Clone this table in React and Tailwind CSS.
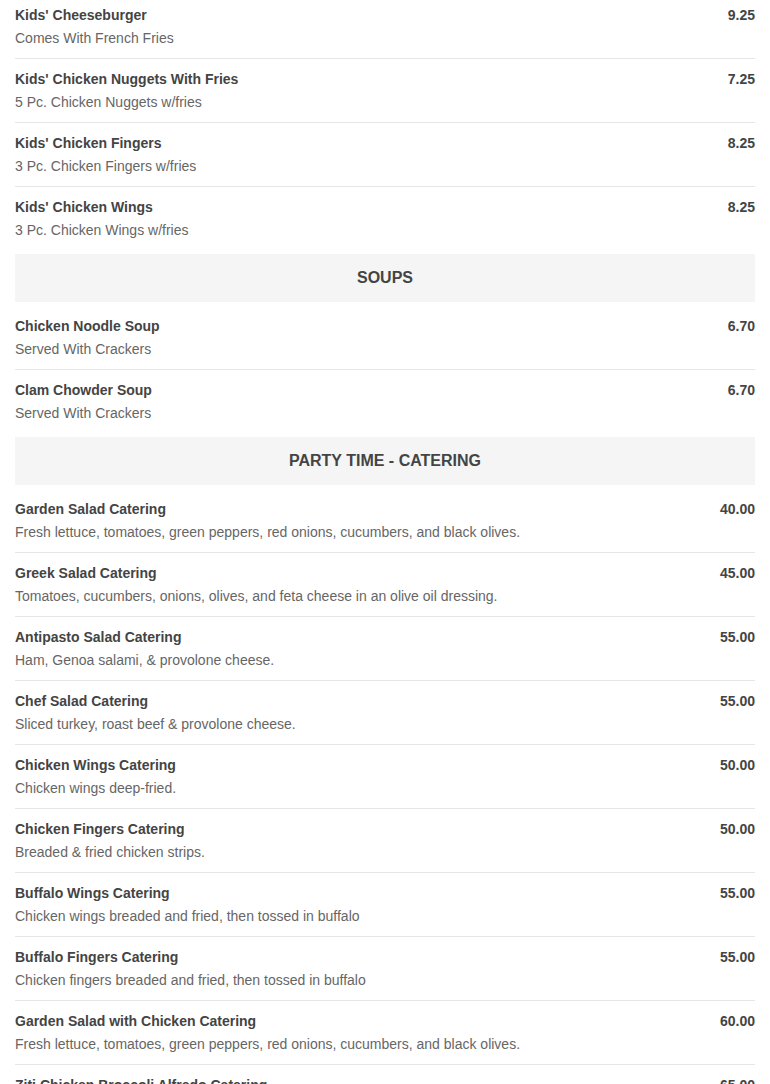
import React from 'react';

const kids = [
  { name: "Kids' Cheeseburger", desc: 'Comes With French Fries', price: '9.25' },
  { name: "Kids' Chicken Nuggets With Fries", desc: '5 Pc. Chicken Nuggets w/fries', price: '7.25' },
  { name: "Kids' Chicken Fingers", desc: '3 Pc. Chicken Fingers w/fries', price: '8.25' },
  { name: "Kids' Chicken Wings", desc: '3 Pc. Chicken Wings w/fries', price: '8.25' },
];

const soups = [
  { name: 'Chicken Noodle Soup', desc: 'Served With Crackers', price: '6.70' },
  { name: 'Clam Chowder Soup', desc: 'Served With Crackers', price: '6.70' },
];

const catering = [
  { name: 'Garden Salad Catering', desc: 'Fresh lettuce, tomatoes, green peppers, red onions, cucumbers, and black olives.', price: '40.00' },
  { name: 'Greek Salad Catering', desc: 'Tomatoes, cucumbers, onions, olives, and feta cheese in an olive oil dressing.', price: '45.00' },
  { name: 'Antipasto Salad Catering', desc: 'Ham, Genoa salami, & provolone cheese.', price: '55.00' },
  { name: 'Chef Salad Catering', desc: 'Sliced turkey, roast beef & provolone cheese.', price: '55.00' },
  { name: 'Chicken Wings Catering', desc: 'Chicken wings deep-fried.', price: '50.00' },
  { name: 'Chicken Fingers Catering', desc: 'Breaded & fried chicken strips.', price: '50.00' },
  { name: 'Buffalo Wings Catering', desc: 'Chicken wings breaded and fried, then tossed in buffalo', price: '55.00' },
  { name: 'Buffalo Fingers Catering', desc: 'Chicken fingers breaded and fried, then tossed in buffalo', price: '55.00' },
  { name: 'Garden Salad with Chicken Catering', desc: 'Fresh lettuce, tomatoes, green peppers, red onions, cucumbers, and black olives.', price: '60.00' },
  { name: 'Ziti Chicken Broccoli Alfredo Catering', desc: 'Ziti pasta with chicken and broccoli in alfredo sauce.', price: '65.00' },
];

function Item({ item, last }) {
  return (
    <div className={`flex justify-between py-[10px] ${last ? '' : 'border-b border-[#e6e6e6]'}`}>
      <div className="flex flex-col gap-[3px]">
        <p className="text-sm leading-5 font-bold text-[#444]">{item.name}</p>
        <p className="text-sm leading-5 text-[#666]">{item.desc}</p>
      </div>
      <span className="text-sm leading-5 font-bold text-[#444]">{item.price}</span>
    </div>
  );
}

function Section({ title, items }) {
  return (
    <div>
      {title && (
        <div className="my-1 h-12 flex items-center justify-center bg-[#f5f5f5] text-base font-bold text-[#444]">
          {title}
        </div>
      )}
      {items.map((it, i) => (
        <Item key={it.name} item={it} last={i === items.length - 1} />
      ))}
    </div>
  );
}

export default function App() {
  return (
    <div className="min-h-screen bg-white px-[15px] overflow-hidden" style={{ fontFamily: '"Liberation Sans", Arial, sans-serif' }}>
      <div className="-mt-[5px]">
        <Section items={kids} />
        <Section title="SOUPS" items={soups} />
        <Section title="PARTY TIME - CATERING" items={catering} />
      </div>
    </div>
  );
}
